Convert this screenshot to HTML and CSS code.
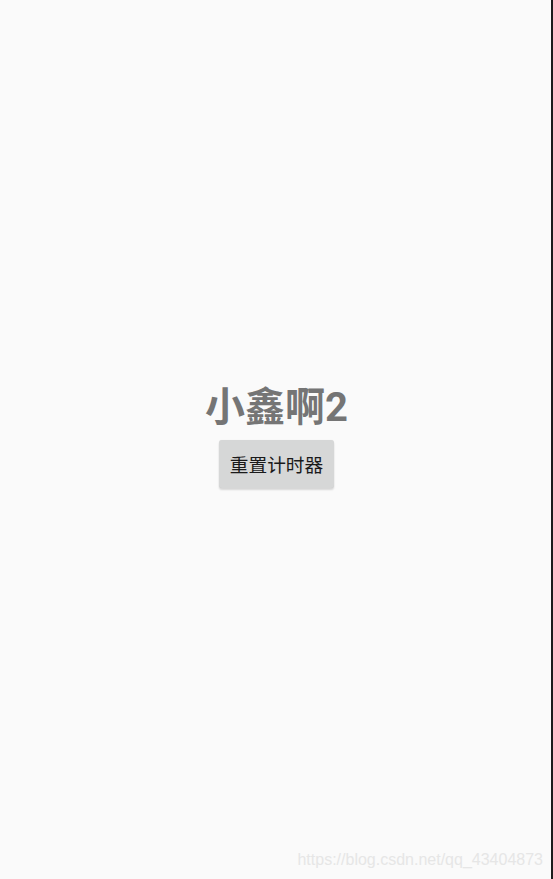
FILE: index.html
```html
<!DOCTYPE html>
<html lang="zh-CN">
<head>
<meta charset="utf-8">
<title>计时器</title>
<link rel="stylesheet" href="styles.css">
</head>
<body>
<div class="screen">
  <main class="content">
    <h1 class="title">小鑫啊2</h1>
    <button class="btn" type="button">重置计时器</button>
  </main>
  <div class="edge"></div>
  <div class="watermark">https://blog.csdn.net/qq_43404873</div>
</div>
</body>
</html>
```

FILE: styles.css
```css
html, body {
  margin: 0;
  padding: 0;
  height: 100%;
}
body {
  background: #fafafa;
  font-family: Roboto, "Noto Sans CJK SC", sans-serif;
}
.screen {
  position: relative;
  display: flex;
  height: 879px;
  width: 553px;
  overflow: hidden;
}
.content {
  flex: 1;
  display: flex;
  flex-direction: column;
  align-items: center;
  justify-content: center;
  padding-left: 2px;
  padding-bottom: 5px;
}
.edge {
  width: 2px;
  background: #1c1c1c;
}
.title {
  margin: 0;
  font-family: Roboto, "Noto Sans CJK SC", sans-serif;
  font-size: 40px;
  line-height: 53px;
  font-weight: 700;
  color: #757575;
}
.btn {
  margin: 6px 0;
  height: 48px;
  width: 115px;
  padding: 0;
  border: none;
  border-radius: 3px;
  background: #d6d7d7;
  color: #1a1a1a;
  font-family: Roboto, "Noto Sans CJK SC", sans-serif;
  font-size: 18.7px;
  box-shadow: 0 2px 2px rgba(0,0,0,0.14), 0 0 1px rgba(0,0,0,0.1);
}
.watermark {
  position: absolute;
  right: 10px;
  bottom: 10px;
  font-family: "Liberation Sans", Arial, sans-serif;
  font-size: 16px;
  line-height: 18px;
  color: #e6e6e6;
}
```
